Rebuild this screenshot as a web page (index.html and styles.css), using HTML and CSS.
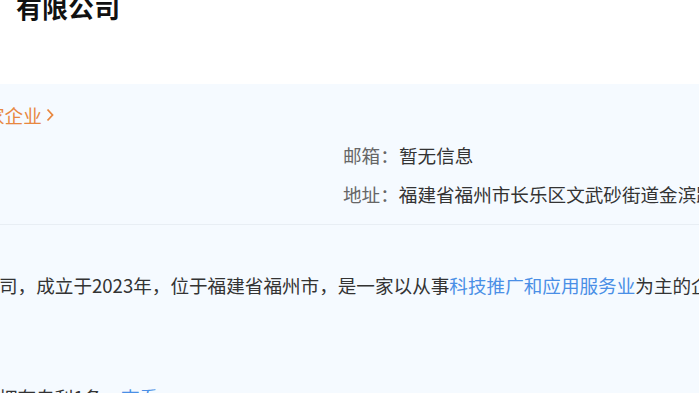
FILE: index.html
```html
<!DOCTYPE html>
<html lang="zh-CN">
<head>
  <meta charset="UTF-8">
  <meta name="viewport" content="width=device-width, initial-scale=1">
  <title>企业信息</title>
  <link rel="stylesheet" href="styles.css">
</head>
<body>
  <header class="company-head">
    <h1 class="company-name">有限公司</h1>
  </header>

  <section class="profile">
    <div class="profile-top">
      <div class="tag-row">
        <a class="tag-link">家企业</a>
        <svg class="chevron" width="8" height="14" viewBox="0 0 8 14"><path d="M1.5 1.5 L6.5 7 L1.5 12.5" fill="none" stroke="#e8873f" stroke-width="1.8"/></svg>
      </div>
      <div class="contact">
        <div class="contact-row">
          <span class="label">邮箱：</span><span class="value">暂无信息</span>
        </div>
        <div class="contact-row">
          <span class="label">地址：</span><span class="value">福建省福州市长乐区文武砂街道金滨路</span>
        </div>
      </div>
    </div>

    <div class="profile-desc">
      <p class="desc-line">司，成立于2023年，位于福建省福州市，是一家以从事<a class="link">科技推广和应用服务业</a>为主的企业。</p>
      <p class="desc-line">拥有专利1条，<a class="link">查看</a></p>
    </div>
  </section>
</body>
</html>
```

FILE: styles.css
```css
/* Base */
html, body {
  margin: 0;
  height: 100%;
  overflow: hidden;
}
body {
  width: 699px;
  font-family: "Noto Sans CJK SC", "Noto Sans", sans-serif;
  font-size: 18.6px;
  color: #333;
  background: #f5faff;
  white-space: nowrap;
}
a { text-decoration: none; }

/* Header */
.company-head {
  height: 84px;
  background: #fff;
  overflow: hidden;
}
.company-name {
  margin: -6px 0 0 16px;
  font-size: 26px;
  line-height: 26px;
  font-weight: 700;
  color: #111;
}

/* Profile panel */
.profile-top {
  padding: 18px 0 11px;
  border-bottom: 1px solid #e8eef4;
}
.tag-row {
  display: flex;
  align-items: center;
  gap: 4px;
  height: 26px;
  margin: 0 0 7px -14px;
}
.tag-link {
  color: #e8873f;
  line-height: 26px;
}
.chevron { display: block; }
.contact {
  margin-left: 343px;
}
.contact-row {
  display: flex;
  line-height: 39px;
}
.label {
  width: 56px;
  color: #666;
}
.value { color: #333; }

/* Description */
.profile-desc {
  padding-top: 45px;
}
.desc-line {
  margin: 0 0 82px -1px;
  line-height: 30px;
}
.link { color: #4a8fe6; }
```
